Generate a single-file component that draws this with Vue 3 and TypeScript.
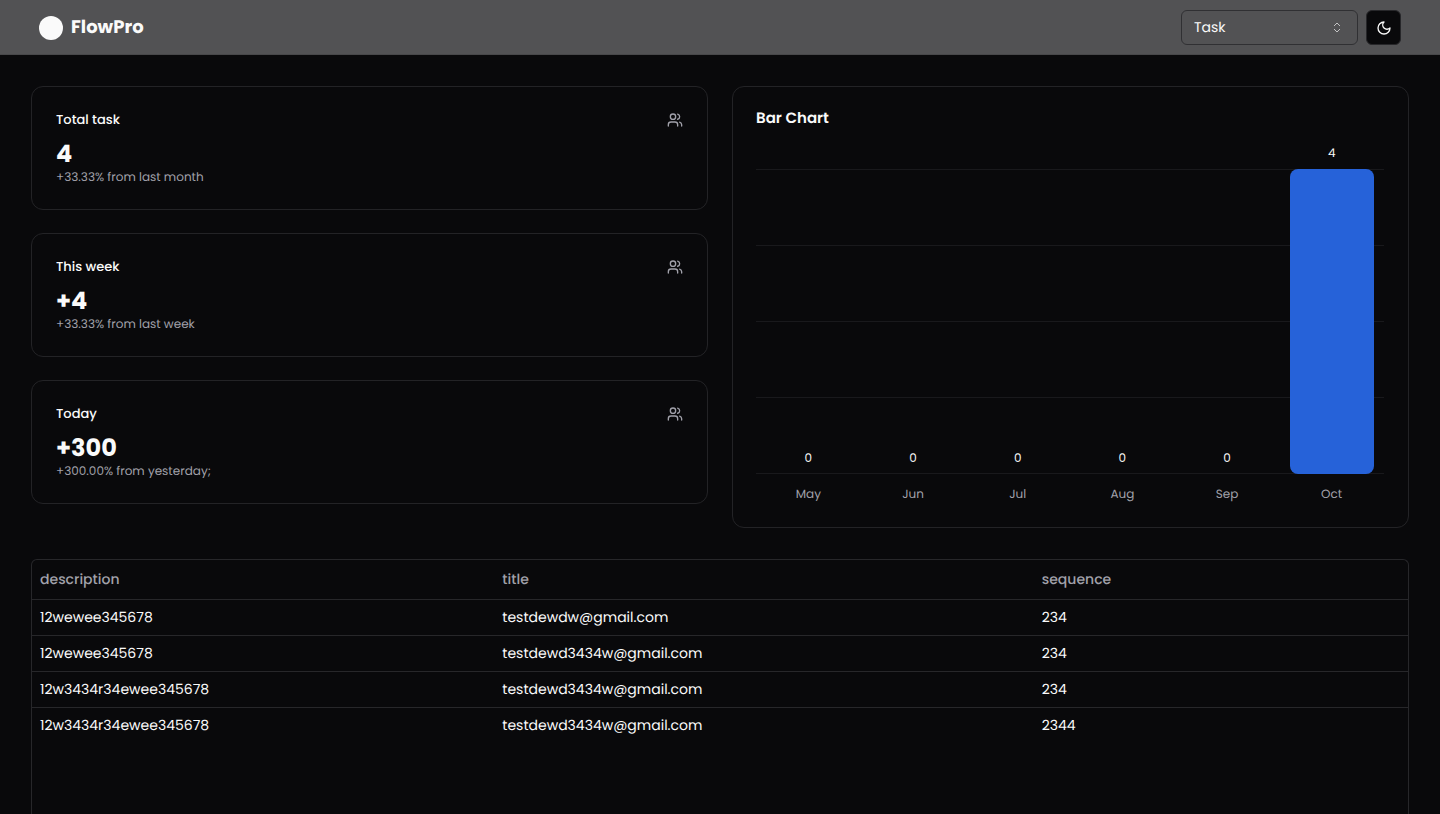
<script setup lang="ts">
import { computed, ref } from 'vue'

interface Stat { title: string; value: string; note: string }
interface Month { name: string; total: number }
interface Row { description: string; title: string; sequence: number }

const view = ref('Task')

const stats: Stat[] = [
  { title: 'Total task', value: '4', note: '+33.33% from last month' },
  { title: 'This week', value: '+4', note: '+33.33% from last week' },
  { title: 'Today', value: '+300', note: '+300.00% from yesterday;' },
]

const months: Month[] = [
  { name: 'May', total: 0 },
  { name: 'Jun', total: 0 },
  { name: 'Jul', total: 0 },
  { name: 'Aug', total: 0 },
  { name: 'Sep', total: 0 },
  { name: 'Oct', total: 4 },
]

const rows: Row[] = [
  { description: '12wewee345678', title: 'testdewdw@gmail.com', sequence: 234 },
  { description: '12wewee345678', title: 'testdewd3434w@gmail.com', sequence: 234 },
  { description: '12w3434r34ewee345678', title: 'testdewd3434w@gmail.com', sequence: 234 },
  { description: '12w3434r34ewee345678', title: 'testdewd3434w@gmail.com', sequence: 2344 },
]

const peak = computed(() => Math.max(...months.map((m) => m.total), 1))
const barHeight = (total: number): string => `${(total / peak.value) * 100}%`
</script>

<template>
  <div class="page">
    <header class="topbar">
      <a class="brand" href="#">
        <span class="brand-mark"></span>
        <span>FlowPro</span>
      </a>
      <div class="actions">
        <div class="picker">
          <select v-model="view" aria-label="View">
            <option>Task</option>
            <option>User</option>
          </select>
          <svg class="picker-icon" viewBox="0 0 16 16" aria-hidden="true">
            <path d="M5.300 6.200 8 3.500l2.700 2.700M5.300 9.800 8 12.500l2.700-2.700" />
          </svg>
        </div>
        <button class="theme" type="button" aria-label="Toggle theme">
          <svg viewBox="0 0 24 24" aria-hidden="true">
            <path d="M12 3a6 6 0 0 0 9 9 9 9 0 1 1-9-9Z" />
          </svg>
        </button>
      </div>
    </header>

    <main class="content">
      <div class="overview">
        <div class="stats">
          <section v-for="stat in stats" :key="stat.title" class="card stat">
            <div class="stat-head">
              <h2>{{ stat.title }}</h2>
              <svg viewBox="0 0 24 24" aria-hidden="true">
                <path d="M16 21v-2a4 4 0 0 0-4-4H6a4 4 0 0 0-4 4v2" />
                <circle cx="9" cy="7" r="4" />
                <path d="M22 21v-2a4 4 0 0 0-3-3.870M16 3.130a4 4 0 0 1 0 7.750" />
              </svg>
            </div>
            <p class="stat-value">{{ stat.value }}</p>
            <p class="stat-note">{{ stat.note }}</p>
          </section>
        </div>

        <section class="card chart">
          <h2>Bar Chart</h2>
          <div class="plot">
            <div class="grid-lines" aria-hidden="true">
              <span v-for="n in 5" :key="n"></span>
            </div>
            <div v-for="month in months" :key="month.name" class="slot">
              <span class="bar-value">{{ month.total }}</span>
              <div class="bar" :style="{ height: barHeight(month.total) }"></div>
            </div>
          </div>
          <div class="axis">
            <span v-for="month in months" :key="month.name">{{ month.name }}</span>
          </div>
        </section>
      </div>

      <div class="table-frame">
        <table>
          <thead>
            <tr>
              <th class="col-description" scope="col">description</th>
              <th class="col-title" scope="col">title</th>
              <th scope="col">sequence</th>
            </tr>
          </thead>
          <tbody>
            <tr v-for="(row, i) in rows" :key="i">
              <td>{{ row.description }}</td>
              <td>{{ row.title }}</td>
              <td>{{ row.sequence }}</td>
            </tr>
          </tbody>
        </table>
      </div>
    </main>
  </div>
</template>

<style>
body {
  margin: 0;
  background: #09090b;
}
</style>

<style scoped>
.page {
  box-sizing: border-box;
  display: flex;
  flex-direction: column;
  min-height: 100vh;
  background: #09090b;
  color: #fafafa;
  font-family: Poppins, Inter, "Open Sans", sans-serif;
  font-size: 14px;
  line-height: 20px;
  text-rendering: geometricPrecision;
}
.page * {
  box-sizing: border-box;
}
h2,
p {
  margin: 0;
}
svg {
  fill: none;
  stroke: currentColor;
  stroke-width: 2;
  stroke-linecap: round;
  stroke-linejoin: round;
}
.topbar {
  display: flex;
  align-items: center;
  justify-content: space-between;
  height: 55px;
  padding: 0 39px;
  background: #525254;
  box-shadow: inset 0 -1px #48484a;
}
.brand {
  display: flex;
  align-items: center;
  gap: 8px;
  color: inherit;
  font-size: 18px;
  font-weight: 700;
  text-decoration: none;
}
.brand-mark {
  width: 24px;
  height: 24px;
  border-radius: 50%;
  background: #fafafa;
}
.actions {
  display: flex;
  gap: 8px;
}
.picker {
  position: relative;
  width: 177px;
}
.picker select {
  display: block;
  width: 100%;
  height: 35px;
  padding: 0 12px 2px;
  appearance: none;
  border: 1px solid #303033;
  border-radius: 6px;
  background: transparent;
  color: inherit;
  font: inherit;
  text-rendering: inherit;
}
.picker option {
  background: #09090b;
}
.picker-icon {
  position: absolute;
  top: 0;
  right: 13px;
  width: 16px;
  height: 35px;
  color: #c4c4c5;
  stroke-width: 1;
  pointer-events: none;
}
.theme {
  display: grid;
  place-items: center;
  width: 35px;
  height: 35px;
  padding: 0;
  border: 1px solid #27272a;
  border-radius: 6px;
  background: #09090b;
  color: #fafafa;
}
.theme svg {
  width: 16px;
  height: 16px;
}
.content {
  display: flex;
  flex: 1;
  flex-direction: column;
  gap: 31px;
  padding: 31px 31px 0;
}
.overview {
  display: grid;
  grid-template-columns: 1fr 1fr;
  align-items: start;
  gap: 24px;
}
.stats {
  display: flex;
  flex-direction: column;
  gap: 23px;
}
.card {
  padding: 24px;
  border: 1px solid #232326;
  border-radius: 12px;
}
.stat {
  padding-bottom: 23px;
}
.stat-head {
  display: flex;
  align-items: center;
  justify-content: space-between;
  height: 18px;
  margin-bottom: 10px;
}
.stat-head h2 {
  font-size: 13px;
  font-weight: 500;
}
.stat-head svg {
  width: 16px;
  height: 16px;
  color: #a1a1aa;
}
.stat-value {
  font-size: 24px;
  font-weight: 700;
  line-height: 31px;
}
.stat-note {
  color: #a1a1aa;
  font-size: 12px;
  line-height: 16px;
}
.chart {
  padding-left: 23px;
}
.chart h2 {
  margin-bottom: 42px;
  font-size: 15px;
  font-weight: 600;
  line-height: 16px;
}
.plot {
  position: relative;
  display: grid;
  grid-template-columns: repeat(6, 1fr);
  height: 305px;
}
.grid-lines {
  position: absolute;
  inset: 0;
  display: flex;
  flex-direction: column;
  justify-content: space-between;
}
.grid-lines span {
  height: 1px;
  background: #19191c;
}
.slot {
  position: relative;
  display: flex;
  flex-direction: column;
  justify-content: flex-end;
  align-items: center;
}
.bar {
  flex: none;
  width: 80%;
  border-radius: 8px;
  background: #2662d9;
}
.bar-value {
  margin-bottom: 7px;
  font-size: 12px;
  line-height: 16px;
}
.axis {
  display: grid;
  grid-template-columns: repeat(6, 1fr);
  margin-top: 13px;
  color: #a1a1aa;
  font-size: 12px;
  line-height: 16px;
  text-align: center;
}
.table-frame {
  flex: 1;
  border: 1px solid #27272a;
  border-bottom: 0;
  border-radius: 6px 6px 0 0;
}
table {
  width: 100%;
  table-layout: fixed;
  border-collapse: collapse;
}
th,
td {
  height: 36px;
  padding: 0 8px;
  text-align: left;
  font-weight: 400;
}
th {
  height: 39px;
  color: #a1a1aa;
  font-weight: 500;
}
.col-description {
  width: 33.6%;
}
.col-title {
  width: 39.2%;
}
thead tr,
tbody tr:not(:last-child) {
  border-bottom: 1px solid #27272a;
}
</style>
